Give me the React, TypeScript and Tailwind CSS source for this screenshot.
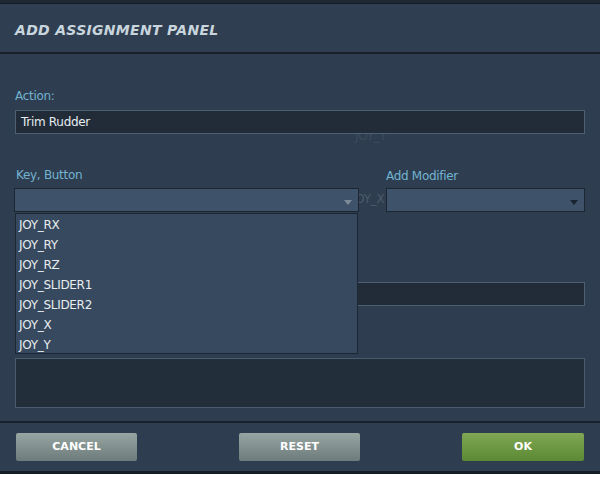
const items = ["JOY_RX", "JOY_RY", "JOY_RZ", "JOY_SLIDER1", "JOY_SLIDER2", "JOY_X", "JOY_Y"];

function Arrow({ color }: { color: string }) {
  return (
    <svg width="8" height="5" viewBox="0 0 8 5" className="absolute right-[6px] top-[11px]">
      <path d="M0 0 L8 0 L4 5 Z" fill={color} />
    </svg>
  );
}

export default function App() {
  return (
    <div className="w-[600px] h-[500px] bg-white font-['DejaVu_Sans',sans-serif]">
      <div className="h-[474px] bg-[#2e3d4f] flex flex-col relative">
        <div className="h-[4px] bg-[#1e2833] border-b border-[#131b24]" />
        {/* header */}
        <div className="h-[50px] bg-[#2f3f51] border-b-2 border-[#18212b] flex items-center px-[15px]">
          <h1 className="text-[14px] font-bold italic text-[#c9d5dd] tracking-[0.3px] mt-[4px]">
            ADD ASSIGNMENT PANEL
          </h1>
        </div>

        {/* body */}
        <div className="relative flex-1 px-[15px]">
          {/* ghost texts */}
          <span className="absolute left-[355px] top-[73px] text-[12px] text-[#3c4c5d] tracking-[-0.3px]">JOY_Y</span>
          <span className="absolute left-[352px] top-[136px] text-[12px] text-[#4b5b6b] tracking-[-0.3px]">JOY_X</span>

          <div className="mt-[35px] text-[12px] leading-[14px] text-[#72b3d1] tracking-[-0.3px]">Action:</div>
          <div className="relative mt-[7px] h-[24px] bg-[#222c39] border border-[#4e6174] flex items-center px-[5px] text-[12px] text-[#e6ecef] tracking-[-0.3px]">
            Trim Rudder
          </div>

          <div className="mt-[34px] flex items-end">
            <div className="w-[344px]">
              <div className="text-[12px] leading-[14px] text-[#72b3d1] tracking-[-0.3px] ml-[1px]">Key, Button</div>
              <div className="relative mt-[6px] h-[24px] bg-[#3e5269] border border-[#1c2733] -ml-[1px]">
                <Arrow color="#7d8b98" />
              </div>
            </div>
            <div className="ml-[27px] flex-1">
              <div className="text-[12px] leading-[14px] text-[#72b3d1] tracking-[-0.3px]">Add Modifier</div>
              <div className="relative mt-[5px] h-[24px] bg-[#3e5269] border border-[#1c2733]">
                <Arrow color="#1a2430" />
              </div>
            </div>
          </div>

          <div className="mt-[70px] h-[24px] bg-[#222c39] border border-[#4e6174]" />
          <div className="mt-[52px] h-[50px] bg-[#232e3b] border border-[#4a5c6e]" />

          {/* open dropdown */}
          <div className="absolute left-[15px] top-[159px] w-[343px] h-[141px] bg-[#37495e] border border-[#1c2733] pt-[1px]">
            {items.map((it) => (
              <div key={it} className="h-[20px] flex items-center px-[3px] text-[12px] text-[#e8edf0] tracking-[-0.3px]">
                {it}
              </div>
            ))}
          </div>
        </div>

        {/* footer */}
        <div className="h-[50px] border-t-2 border-[#18212b] flex items-center justify-between px-[16px] pb-[1px]">
          <button className="w-[121px] h-[28px] rounded-[2px] bg-gradient-to-b from-[#97a6a3] to-[#6d7c7a] text-white text-[11px] font-bold pt-[1px]">
            CANCEL
          </button>
          <button className="w-[121px] h-[28px] rounded-[2px] bg-gradient-to-b from-[#97a6a3] to-[#6d7c7a] text-white text-[11px] font-bold pt-[1px]">
            RESET
          </button>
          <button className="w-[122px] h-[28px] rounded-[2px] bg-gradient-to-b from-[#80a754] to-[#5b8934] text-white text-[11px] font-bold pt-[1px]">
            OK
          </button>
        </div>
        <div className="h-[3px] bg-[#141c25]" />
      </div>
    </div>
  );
}
